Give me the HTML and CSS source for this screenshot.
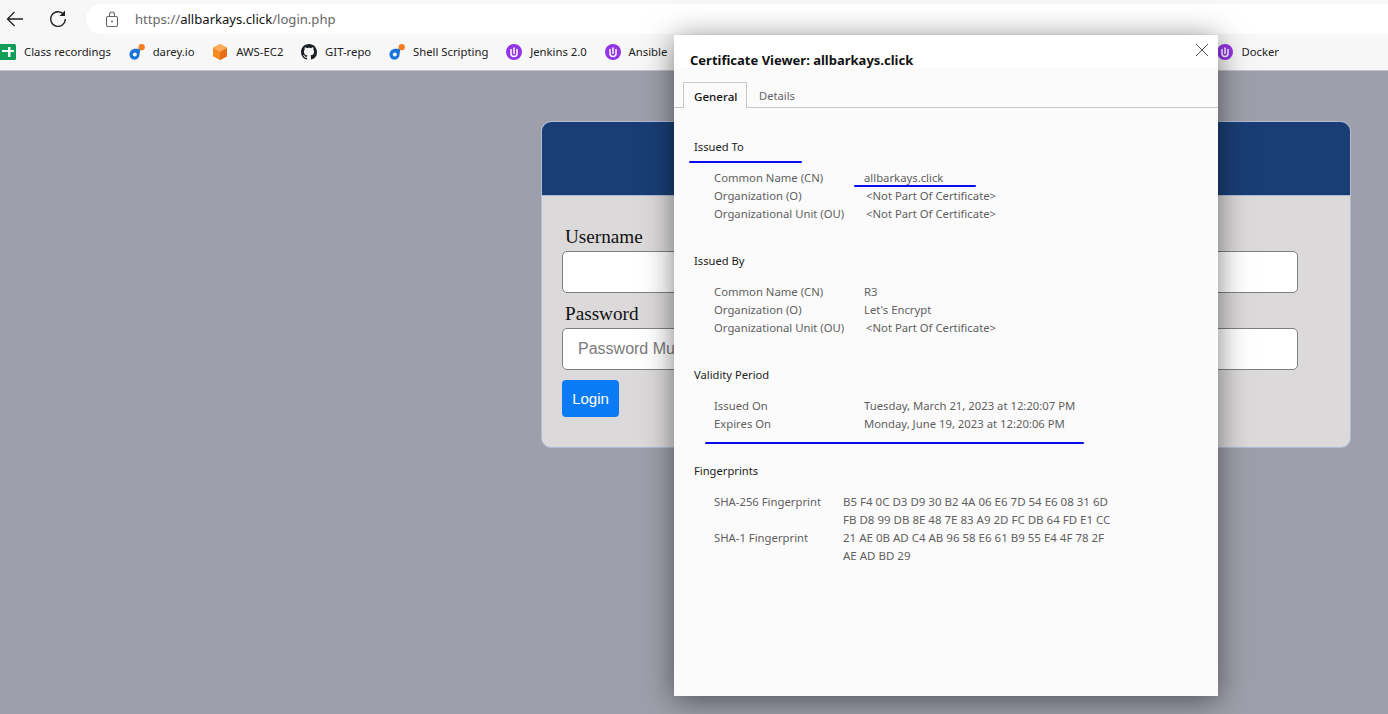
FILE: index.html
```html
<!DOCTYPE html>
<html lang="en">
<head>
  <meta charset="UTF-8" />
  <meta name="viewport" content="width=device-width, initial-scale=1.0"/>
  <title>Certificate Viewer: allbarkays.click</title>
  <link rel="stylesheet" href="styles.css">
</head>
<body>
  <svg class="sprites" width="0" height="0" aria-hidden="true">
    <symbol id="icon-darey" viewBox="0 0 16 16">
      <path fill="#1a73d9" d="M0.500 10.500C0.500 7 3.300 4.700 6.600 4.700H11.200L10.600 10.500C10.300 13.600 8.600 15.700 5.500 15.700C2.600 15.700 0.500 13.500 0.500 10.500Z"/>
      <circle cx="5.800" cy="10.500" r="2" fill="#f7f7f7"/>
      <circle cx="12.700" cy="3.200" r="3.100" fill="#f47b20"/>
    </symbol>
    <symbol id="icon-unit" viewBox="0 0 16 16">
      <circle cx="8" cy="8" r="8" fill="#9334e6"/>
      <path fill="none" stroke="#fff" stroke-width="1.500" stroke-linecap="round" d="M5 5.500V9.500C5 11.300 6.200 12.500 8 12.500C9.800 12.500 11 11.300 11 9.500V5.500"/>
      <path fill="none" stroke="#fff" stroke-width="1.500" stroke-linecap="round" d="M8 4V9.500"/>
    </symbol>
  </svg>

  <header class="toolbar">
    <svg class="nav-icon" width="18" height="16" viewBox="0 0 18 16">
      <path fill="none" stroke="#222" stroke-width="1.300" d="M17 8H1.500M8.500 1L1.500 8L8.500 15"/>
    </svg>
    <svg class="nav-icon reload" width="18" height="18" viewBox="0 0 18 18">
      <path fill="none" stroke="#222" stroke-width="1.300" d="M14.700 4.500A7.300 7.300 0 1 0 16.300 9"/>
      <path fill="#222" d="M16 0.500V6H10.500Z"/>
    </svg>
    <div class="omnibox">
      <svg width="14" height="16" viewBox="0 0 14 16">
        <rect x="1.500" y="5.500" width="11" height="10" rx="1.500" fill="none" stroke="#666" stroke-width="1.100"/>
        <path fill="none" stroke="#666" stroke-width="1.100" d="M4.500 5.500V3.500C4.500 2 5.500 1 7 1C8.500 1 9.500 2 9.500 3.500V5.500"/>
        <circle cx="7" cy="10.500" r="1" fill="#666"/>
      </svg>
      <span class="url">https://<b>allbarkays.click</b>/login.php</span>
    </div>
  </header>

  <nav class="bookmarks">
    <a class="bookmark">
      <svg width="16" height="16" viewBox="0 0 16 16">
        <rect x="-3" y="0" width="19" height="16" rx="1.500" fill="#0f9d58"/>
        <path fill="#fff" d="M2 6H8V3H10.500V6H14V8H10.500V13H8V8H2Z"/>
      </svg>
      Class recordings
    </a>
    <a class="bookmark"><svg width="16" height="16"><use href="#icon-darey"/></svg>darey.io</a>
    <a class="bookmark">
      <svg width="16" height="16" viewBox="0 0 16 16">
        <path fill="#f58a1f" d="M8 0L15 3.800V12.200L8 16L1 12.200V3.800Z"/>
        <path fill="#e56f12" d="M8 8L15 3.800V12.200L8 16Z"/>
        <path fill="#fbab5c" d="M8 0L15 3.800L8 8L1 3.800Z"/>
      </svg>
      AWS-EC2
    </a>
    <a class="bookmark">
      <svg width="16" height="16" viewBox="0 0 16 16">
        <path fill="#1b1f23" d="M8 0C3.580 0 0 3.580 0 8c0 3.540 2.290 6.530 5.470 7.590.4.070.55-.17.55-.38 0-.19-.01-.82-.01-1.490-2.010.37-2.530-.49-2.690-.94-.09-.23-.48-.94-.82-1.130-.28-.15-.68-.52-.01-.53.63-.01 1.080.58 1.230.82.72 1.210 1.870.87 2.330.66.070-.52.28-.87.51-1.070-1.780-.2-3.640-.89-3.640-3.950 0-.87.31-1.590.82-2.150-.08-.2-.36-1.020.08-2.120 0 0 .67-.21 2.200.82.64-.18 1.320-.27 2-.27.68 0 1.360.09 2 .27 1.530-1.040 2.200-.82 2.200-.82.44 1.100.16 1.920.08 2.120.51.56.82 1.270.82 2.150 0 3.070-1.870 3.750-3.650 3.950.29.25.54.73.54 1.480 0 1.070-.01 1.930-.01 2.200 0 .21.15.46.55.38A8.013 8.013 0 0016 8c0-4.420-3.580-8-8-8z"/>
      </svg>
      GIT-repo
    </a>
    <a class="bookmark"><svg width="16" height="16"><use href="#icon-darey"/></svg>Shell Scripting</a>
    <a class="bookmark"><svg width="16" height="16"><use href="#icon-unit"/></svg>Jenkins 2.0</a>
    <a class="bookmark"><svg width="16" height="16"><use href="#icon-unit"/></svg>Ansible</a>
    <a class="bookmark bookmark-far"><svg width="16" height="16"><use href="#icon-unit"/></svg>Docker</a>
  </nav>

  <main class="page">
    <div class="login-card">
      <div class="login-head"></div>
      <form class="login-form">
        <label for="username">Username</label>
        <input type="text" id="username" />
        <label for="password">Password</label>
        <input type="password" id="password" placeholder="Password Must" />
        <button type="button" class="login-btn">Login</button>
      </form>
    </div>
  </main>

  <div class="viewer">
    <div class="viewer-head">
      <h1>Certificate Viewer: allbarkays.click</h1>
      <svg class="viewer-close" width="14" height="14" viewBox="0 0 14 14">
        <path fill="none" stroke="#555" stroke-width="1" d="M1 1L13 13M13 1L1 13"/>
      </svg>
    </div>
    <div class="tabs">
      <div class="tab tab-active">General</div>
      <div class="tab">Details</div>
    </div>
    <div class="viewer-body">
      <section class="cert-section">
        <h2>Issued To</h2>
        <dl>
          <dt>Common Name (CN)</dt><dd>allbarkays.click</dd>
          <dt>Organization (O)</dt><dd class="not-part">&lt;Not Part Of Certificate&gt;</dd>
          <dt>Organizational Unit (OU)</dt><dd class="not-part">&lt;Not Part Of Certificate&gt;</dd>
        </dl>
      </section>
      <section class="cert-section">
        <h2>Issued By</h2>
        <dl>
          <dt>Common Name (CN)</dt><dd>R3</dd>
          <dt>Organization (O)</dt><dd>Let's Encrypt</dd>
          <dt>Organizational Unit (OU)</dt><dd class="not-part">&lt;Not Part Of Certificate&gt;</dd>
        </dl>
      </section>
      <section class="cert-section">
        <h2>Validity Period</h2>
        <dl>
          <dt>Issued On</dt><dd>Tuesday, March 21, 2023 at 12:20:07 PM</dd>
          <dt>Expires On</dt><dd>Monday, June 19, 2023 at 12:20:06 PM</dd>
        </dl>
      </section>
      <section class="cert-section">
        <h2>Fingerprints</h2>
        <dl class="prints">
          <dt>SHA-256 Fingerprint</dt><dd>B5 F4 0C D3 D9 30 B2 4A 06 E6 7D 54 E6 08 31 6D<br>FB D8 99 DB 8E 48 7E 83 A9 2D FC DB 64 FD E1 CC</dd>
          <dt>SHA-1 Fingerprint</dt><dd>21 AE 0B AD C4 AB 96 58 E6 61 B9 55 E4 4F 78 2F<br>AE AD BD 29</dd>
        </dl>
      </section>
    </div>
    <!-- hand drawn marks on top of the screenshot -->
    <span class="mark mark-issued"></span>
    <span class="mark mark-cn"></span>
    <span class="mark mark-expiry"></span>
  </div>
</body>
</html>
```

FILE: styles.css
```css
* {
  box-sizing: border-box;
}

html, body {
  height: 100%;
}

body {
  margin: 0;
  display: flex;
  flex-direction: column;
  overflow: hidden;
  background: #9f9fab;
  font-family: 'Noto Sans', 'Open Sans', sans-serif;
}

.sprites {
  position: absolute;
}

/* browser chrome */
.toolbar {
  height: 35px;
  padding: 4px 0 1px 6px;
  display: flex;
  align-items: center;
  background: #f7f7f7;
}

.nav-icon {
  flex: none;
}

.reload {
  margin-left: 25px;
}

.omnibox {
  flex: 1;
  height: 30px;
  margin-left: 19px;
  padding-left: 19px;
  display: flex;
  align-items: center;
  gap: 16px;
  background: #fff;
  border-radius: 15px 0 0 15px;
}

.url {
  font-size: 13.100px;
  color: #666;
}

.url b {
  font-weight: 400;
  color: #111;
}

.bookmarks {
  height: 36px;
  padding: 0 109px 2px 0;
  display: flex;
  align-items: center;
  gap: 17.750px;
  background: #f7f7f7;
  border-bottom: 1px solid #c4c4c8;
}

.bookmark {
  display: flex;
  align-items: center;
  gap: 8px;
  font-size: 11.300px;
  color: #222;
  white-space: nowrap;
}

.bookmark-far {
  margin-left: auto;
}

/* login page behind the dialog */
.page {
  flex: 1;
  padding: 50px 0 0 541px;
}

.login-card {
  width: 810px;
  height: 327px;
  background: #dbd9da;
  border: 1px solid #aebcd6;
  border-radius: 10px;
  overflow: hidden;
}

.login-head {
  height: 74px;
  background: #193e75;
  border-bottom: 1px solid #aebcd6;
}

.login-form {
  padding: 30px 0 0 20px;
}

.login-form label {
  display: block;
  padding-left: 3px;
  font-family: 'Liberation Serif', serif;
  font-size: 19.200px;
  line-height: 22px;
  color: #111;
}

.login-form input {
  display: block;
  width: 736px;
  height: 42px;
  margin: 3px 0 10px;
  padding: 0 15px;
  border: 1px solid #808080;
  border-radius: 5px;
  background: #fff;
  font-family: 'Liberation Sans', sans-serif;
  font-size: 16px;
}

.login-form input::placeholder {
  color: #7b7b7b;
}

.login-btn {
  display: block;
  width: 57px;
  height: 37px;
  padding: 0;
  border: none;
  border-radius: 4px;
  background: #0a7bf5;
  color: #fff;
  font-family: 'Liberation Sans', sans-serif;
  font-size: 15px;
}

/* certificate dialog */
.viewer {
  position: absolute;
  left: 674px;
  top: 35px;
  width: 544px;
  height: 661px;
  background: #fbfbfb;
  box-shadow: 0 4px 28px rgba(0, 0, 0, 0.5);
}

.viewer-head {
  position: relative;
  height: 33px;
  padding: 17px 0 0 16px;
  background: #fff;
}

.viewer-head h1 {
  margin: 0;
  font-size: 13px;
  line-height: 16px;
  font-weight: 700;
  color: #111;
}

.viewer-close {
  position: absolute;
  right: 9px;
  top: 8px;
}

.tabs {
  height: 40px;
  padding: 14px 0 0 9px;
  display: flex;
  border-bottom: 1px solid #c8c8c8;
}

.tab {
  height: 26px;
  padding: 0 12px;
  font-size: 11.200px;
  line-height: 27px;
  color: #666;
}

.tab-active {
  width: 64px;
  height: 26px;
  padding: 0 10px;
  border: 1px solid #c8c8c8;
  border-bottom: none;
  background: #fbfbfb;
  font-size: 11.600px;
  color: #111;
  font-weight: 500;
}

.viewer-body {
  padding: 30px 0 0 20px;
}

.cert-section {
  margin-bottom: 29px;
}

.cert-section h2 {
  margin: 0 0 13px;
  font-size: 11.200px;
  line-height: 18px;
  font-weight: 400;
  color: #222;
}

.cert-section dl {
  margin: 0;
  padding-left: 20px;
  display: grid;
  grid-template-columns: 150px 1fr;
  font-size: 11.300px;
  line-height: 18px;
  color: #5f5f5f;
}

.cert-section dl.prints {
  grid-template-columns: 129px 1fr;
}

.prints dd {
  font-size: 11.500px;
}

.cert-section dd {
  margin: 0;
}

.cert-section dd.not-part {
  padding-left: 2px;
}

.mark {
  position: absolute;
  height: 2px;
  background: #0a0aee;
  border-radius: 1px;
}

.mark-issued {
  left: 15px;
  top: 126px;
  width: 113px;
}

.mark-cn {
  left: 180px;
  top: 150px;
  width: 122px;
}

.mark-expiry {
  left: 31px;
  top: 407px;
  width: 379px;
}
```
